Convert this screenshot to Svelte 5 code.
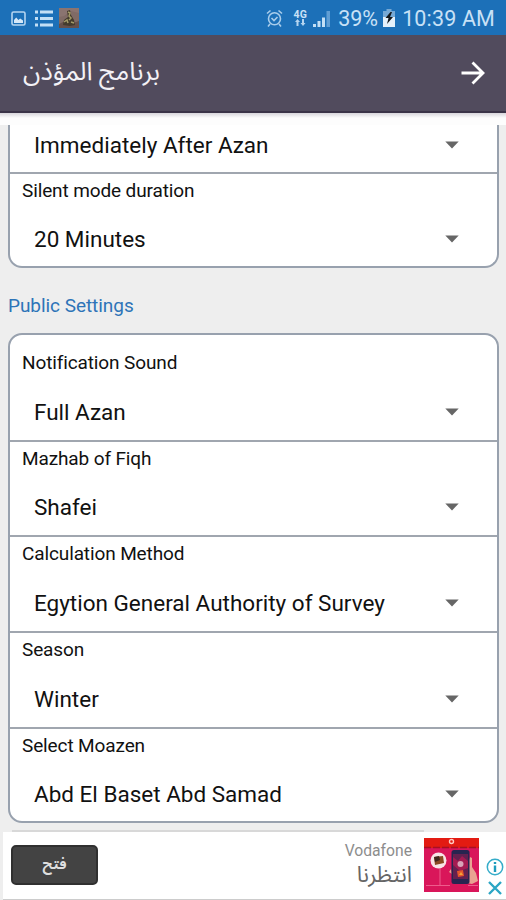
<script>
    const silentRows = [
        {label: "", value: "Immediately After Azan"},
        {label: "Silent mode duration", value: "20 Minutes"}
    ];

    const publicRows = [
        {label: "Notification Sound", value: "Full Azan"},
        {label: "Mazhab of Fiqh", value: "Shafei"},
        {label: "Calculation Method", value: "Egytion General Authority of Survey"},
        {label: "Season", value: "Winter"},
        {label: "Select Moazen", value: "Abd El Baset Abd Samad"}
    ];
</script>

{#snippet settingRow(row)}
    <div class="row">
        {#if row.label}
            <div class="label">{row.label}</div>
        {/if}
        <div class="select">
            <span>{row.value}</span>
            <svg class="caret" width="14" height="8" viewBox="0 0 14 8">
                <path d="M0.3 0.5H13.7L7 7.5Z" fill="#666" />
            </svg>
        </div>
    </div>
{/snippet}

<div class="screen">
    <div class="status">
        <svg class="photo" width="15" height="15" viewBox="0 0 15 15">
            <rect x="1" y="1" width="13" height="13" rx="1.5" fill="none" stroke="#b5d5f0" stroke-width="1.6" />
            <path d="M3 12V9l2.200-2.500 2.200 2.500 1.800-1.500L12 9.500V12Z" fill="#d5e8f8" />
        </svg>
        <svg class="list" width="18" height="17" viewBox="0 0 18 17" fill="#c3dff5">
            <path d="M0 .5h3v3H0zM5 .5h13v3H5zM0 7h3v3H0zM5 7h13v3H5zM0 13.500h3v3H0zM5 13.500h13v3H5z" />
        </svg>
        <svg class="thumb" width="20" height="20" viewBox="0 0 20 20">
            <rect width="20" height="20" rx="1" fill="#806b66" />
            <path d="M0 0h20v5L12 3 5 8 0 9Z" fill="#8a7470" />
            <path d="M0 20v-4l6-3 8 2 6-2v7Z" fill="#66504b" />
            <path d="M8 3l3-1 1 5 3 5 1 5-5 1-7-1 1-5 4-3Z" fill="#433b2d" />
            <path d="M9 4l2 1-1 3 2 2-2 2M5 14l3-2 1 3M12 14l3 1" fill="none" stroke="#a39a68" stroke-width="1.500" />
        </svg>

        <svg class="alarm" width="17" height="19" viewBox="0 0 17 19" fill="none" stroke="#a9cdeb" stroke-width="1.600">
            <circle cx="8.500" cy="9.800" r="6" />
            <path d="M1 4.500L4.500 1.500M16 4.500L12.500 1.500M5.500 9l2.500 2.500 3.500-3.500M4 15l-2 2.500M13 15l2 2.500" />
        </svg>
        <div class="net">
            <span>4G</span>
            <svg width="11" height="7" viewBox="0 0 11 7" fill="#b5d5f0">
                <path d="M1.500 7V3H0l2.500-3L5 3H3.500v4zM7 0h2v4h1.500L8 7 5.500 4H7z" />
            </svg>
        </div>
        <svg class="signal" width="18" height="17" viewBox="0 0 18 17">
            <path d="M0 14h3v3H0zM4.500 11h3v6h-3zM9 7.500h3V17H9z" fill="#c3dff5" />
            <path d="M13.500 1h3.500v16h-3.500z" fill="#609ed4" />
        </svg>
        <span class="percent">39%</span>
        <svg class="battery" width="12" height="18" viewBox="0 0 12 18">
            <path d="M3.500 0h5v2H12v7H0V2h3.500z" fill="#76a9d5" />
            <path d="M0 8h12v10H0z" fill="#e4f0fa" />
            <path d="M7.500 3L2.500 9h3L4 15l6-7H7l2-5Z" fill="#14181c" />
        </svg>
        <span class="time">10:39 AM</span>
    </div>

    <header>
        <h1 dir="rtl">برنامج المؤذن</h1>
        <svg width="24" height="24" viewBox="0 0 24 24" fill="none" stroke="#fff" stroke-width="2.800">
            <path d="M0.500 12H21.500M11.500 1.500L22 12 11.500 22.500" />
        </svg>
    </header>
    <div class="shade"></div>

    <main>
        <section class="card clipped">
            {#each silentRows as row}
                {@render settingRow(row)}
            {/each}
        </section>

        <h2>Public Settings</h2>

        <section class="card full">
            {#each publicRows as row}
                {@render settingRow(row)}
            {/each}
        </section>
        <div class="next"></div>
    </main>

    <footer>
        <button dir="rtl">فتح</button>
        <div class="ad">
            <span class="brand">Vodafone</span>
            <span class="wait" dir="rtl">انتظرنا</span>
        </div>
        <svg class="banner" width="55" height="54" viewBox="0 0 55 54">
            <rect width="55" height="54" fill="#d9165a" />
            <rect width="55" height="10" fill="#e31b12" />
            <path d="M0 9.500h55" stroke="#a80f22" stroke-width="1.500" stroke-dasharray="7 2" />
            <circle cx="27.500" cy="3.500" r="2" fill="none" stroke="#ffc9c0" stroke-width="1.400" />
            <path d="M16 29v18M2 47.500h24M44 47.500h10" stroke="#ee5c8c" stroke-width="1" />
            <circle cx="14.500" cy="22.500" r="8" fill="#f8e4e6" />
            <path d="M10 19l9-1 1 7-9 2Z" fill="#8a4a22" />
            <path d="M10 19l5-1 1 4-5 2Z" fill="#40261c" />
            <path d="M43 29l3-10 2 1v9l4 6 2 8-6 3-5-1Z" fill="#e9a292" />
            <path d="M27 31l-2 3 3 2z" fill="#e9a292" />
            <rect x="27.500" y="12" width="18" height="34" rx="2.500" fill="#282450" />
            <rect x="29" y="16" width="15" height="25" fill="#65204f" />
            <path d="M29 19l5 4 4-5 6 5v7l-8 3-7-6Z" fill="#a41b52" />
            <circle cx="36.500" cy="26" r="3" fill="#d8a5b9" />
            <path d="M33 33l6-1 1 6-6 1z" fill="#e4562c" />
            <path d="M37 34l2 3h-4z" fill="#f5a33a" />
        </svg>
        <div class="choices">
            <svg width="18" height="18" viewBox="0 0 18 18">
                <circle cx="9" cy="9" r="7.700" fill="#fff" stroke="#35acc9" stroke-width="1.500" />
                <path d="M9 4v2M9 7.500V14" stroke="#1d9cbd" stroke-width="2.400" />
            </svg>
            <svg width="14" height="14" viewBox="0 0 14 14">
                <path d="M1 1l12 12M13 1L1 13" stroke="#2ba6c5" stroke-width="2.400" />
            </svg>
        </div>
    </footer>
</div>

<style>
    :global(body) {
        background: #eee;
    }

    .screen {
        width: 506px;
        height: 900px;
        overflow: hidden;
        display: flex;
        flex-direction: column;
        background: #eee;
        font-family: Roboto, "Noto Sans Arabic", "DejaVu Sans", sans-serif;
        color: #111;
    }

    .status {
        flex: none;
        display: flex;
        align-items: center;
        height: 35px;
        box-sizing: border-box;
        padding: 1px 11px 0 11px;
        background: #1c70b8;
        color: #c8e1f6;
        font-size: 21.500px;
        white-space: nowrap;
    }

    .list {
        margin-left: 9px;
    }

    .thumb {
        margin-left: 6px;
    }

    .alarm {
        margin-left: auto;
    }

    .net {
        display: flex;
        flex-direction: column;
        align-items: center;
        width: 14px;
        margin-left: 10px;
        font-size: 10.500px;
        font-weight: bold;
        line-height: 9px;
    }

    .signal {
        margin-left: 6px;
    }

    .percent {
        margin-left: 7px;
    }

    .battery {
        margin-left: 5px;
    }

    .time {
        margin-left: 7px;
        letter-spacing: 0.150px;
    }

    header {
        flex: none;
        display: flex;
        align-items: center;
        justify-content: space-between;
        height: 78px;
        box-sizing: border-box;
        padding: 0 21px 0 23px;
        background: #514b5d;
        border-bottom: 2px solid #3b3448;
    }

    h1 {
        margin: 0;
        padding-bottom: 5px;
        font-size: 25.700px;
        font-weight: normal;
        line-height: 40px;
        color: #f3f1f6;
    }

    .shade {
        flex: none;
        height: 12px;
        background: linear-gradient(#d8d6dc, #fdfdfd 5px);
    }

    main {
        flex: none;
        height: 707px;
        overflow: hidden;
        padding: 0 7px 0 8px;
    }

    .card {
        box-sizing: border-box;
        border: 2.5px solid #98a1ae;
        border-radius: 14px;
        background: #fff;
    }

    .clipped {
        height: 143px;
        border-top: none;
        border-radius: 0 0 14px 14px;
    }

    .full {
        height: 490px;
        padding-top: 11px;
    }

    .row {
        display: flex;
        flex-direction: column;
        justify-content: space-between;
        height: 95.700px;
        box-sizing: border-box;
        border-bottom: 2px solid #a0a6af;
    }

    .row:last-child {
        height: 93px;
        border-bottom: none;
    }

    .clipped .row:first-child {
        height: 49px;
        justify-content: flex-end;
    }

    .label {
        padding: 4px 12px 0;
        font-size: 19px;
        line-height: 26px;
        letter-spacing: -0.120px;
    }

    .select {
        display: flex;
        align-items: center;
        justify-content: space-between;
        height: 40px;
        padding: 0 38px 8px 24px;
        font-size: 22.500px;
    }

    h2 {
        margin: 0;
        padding: 20px 0 10px;
        font-size: 19px;
        font-weight: normal;
        line-height: 35px;
        letter-spacing: -0.050px;
        color: #2d74b8;
    }

    .next {
        height: 2px;
        margin: 7px 75px 0 4px;
        background: #d8d8d8;
    }

    footer {
        flex: none;
        display: flex;
        align-items: center;
        height: 68px;
        box-sizing: border-box;
        margin-left: 3px;
        padding: 0 2px 2px 8px;
        background: #fff;
        border-bottom: 1px solid #ccc;
    }

    button {
        width: 87px;
        height: 40px;
        border: 2px solid #303030;
        border-radius: 5px;
        background: #434343;
        color: #dedede;
        font: bold 14.500px "Noto Sans Arabic", "DejaVu Sans", sans-serif;
    }

    .ad {
        display: flex;
        flex-direction: column;
        align-items: flex-end;
        margin-left: auto;
    }

    .brand {
        font-size: 15.700px;
        line-height: 20px;
        color: #8d8d8d;
    }

    .wait {
        font-size: 22px;
        line-height: 28px;
        color: #666;
    }

    .banner {
        margin-left: 12px;
    }

    .choices {
        display: flex;
        flex-direction: column;
        align-items: center;
        gap: 5px;
        margin: 23px 0 0 7px;
    }
</style>
